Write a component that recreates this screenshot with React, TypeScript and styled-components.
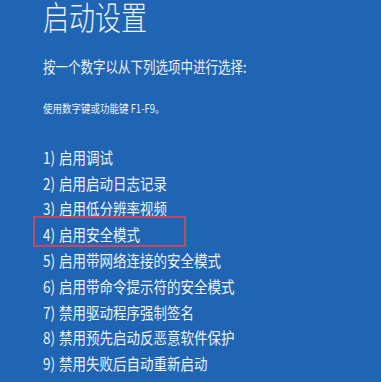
import React from 'react'
import styled, { createGlobalStyle } from 'styled-components'

const GlobalStyle = createGlobalStyle`
  html, body {
    margin: 0;
    padding: 0;
    background: #1f65b3;
  }
  body {
    font-family: 'Noto Sans CJK SC', 'Noto Sans', sans-serif;
  }
`

const Screen = styled.div`
  width: 381px;
  height: 382px;
  box-sizing: border-box;
  overflow: hidden;
  padding-left: 43px;
  background: #1f65b3;
  color: #edf2fa;
  display: flex;
  flex-direction: column;
`

const Title = styled.h1`
  margin: 0;
  font-size: 26px;
  font-weight: 300;
  line-height: 26px;
  white-space: nowrap;
  transform: scaleY(1.25);
  transform-origin: 0 0;
`

const Prompt = styled.p`
  margin: 31px 0 0;
  font-size: 12.5px;
  font-weight: 400;
  line-height: 20px;
  white-space: nowrap;
  transform: scaleY(1.25);
  transform-origin: 0 50%;
`

const Hint = styled.p`
  margin: 23px 0 0;
  font-size: 9.5px;
  line-height: 16px;
  white-space: nowrap;
  transform: scaleY(1.2);
  transform-origin: 0 50%;
`

const Options = styled.ol`
  list-style: none;
  margin: 28px 0 0;
  padding: 0;
  display: flex;
  flex-direction: column;
`

const Option = styled.li<{ $selected?: boolean }>`
  position: relative;
  height: 25.8px;
  display: flex;
  align-items: center;
  font-size: 13.5px;
  white-space: nowrap;

  &::after {
    content: '';
    display: ${p => (p.$selected ? 'block' : 'none')};
    position: absolute;
    top: -5px;
    bottom: 0;
    left: -10px;
    width: 153px;
    box-sizing: border-box;
    border: 2px solid #c8475c;
  }
`

const OptionText = styled.span`
  display: inline-block;
  transform: scaleY(1.2);
`

const Num = styled.span`
  margin-right: 4px;
`

const options = [
  '启用调试',
  '启用启动日志记录',
  '启用低分辨率视频',
  '启用安全模式',
  '启用带网络连接的安全模式',
  '启用带命令提示符的安全模式',
  '禁用驱动程序强制签名',
  '禁用预先启动反恶意软件保护',
  '禁用失败后自动重新启动',
]

export default function App() {
  return (
    <>
      <GlobalStyle />
      <Screen>
        <Title>启动设置</Title>
        <Prompt>按一个数字以从下列选项中进行选择:</Prompt>
        <Hint>使用数字键或功能键 F1-F9。</Hint>
        <Options>
          {options.map((label, i) => (
            <Option key={label} $selected={i === 3}>
              <OptionText>
                <Num>{i + 1})</Num>
                {label}
              </OptionText>
            </Option>
          ))}
        </Options>
      </Screen>
    </>
  )
}
